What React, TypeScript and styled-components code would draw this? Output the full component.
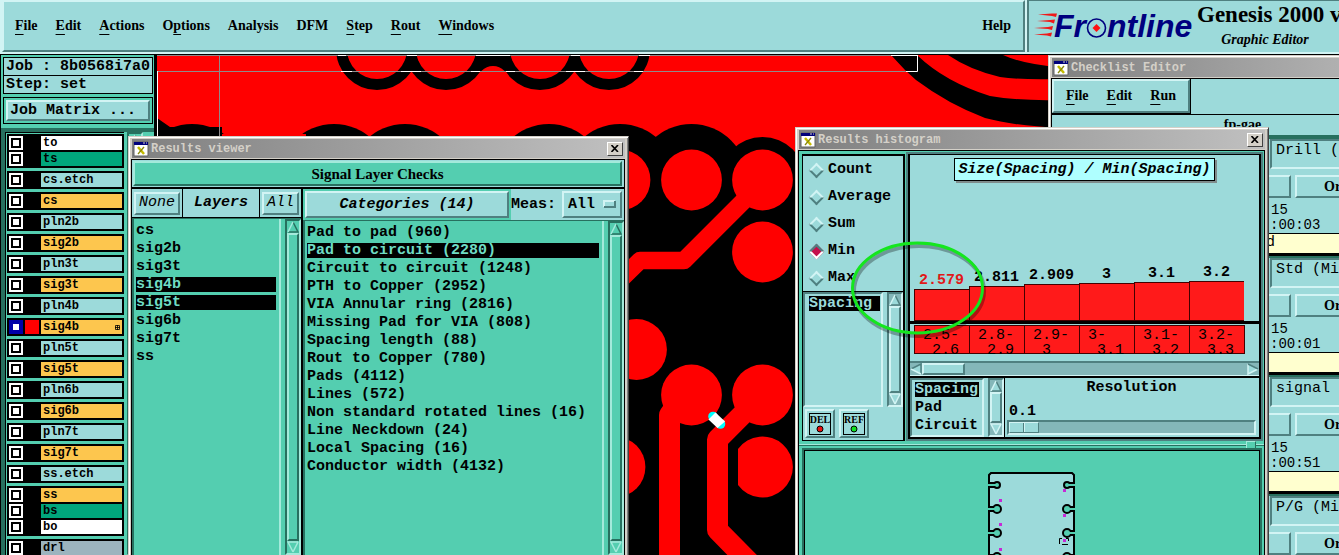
import React, { ReactNode } from 'react';
import styled, { createGlobalStyle, css } from 'styled-components';

const serif = '"Liberation Serif", serif';
const mono = '"Liberation Mono", monospace';
const aqua = '#9cdada';
const aquaLight = '#d2f4f4';
const aquaDark = '#4f8080';
const mint = '#54ceb0';
const mintLight = '#a4eadb';
const mintDark = '#27705f';
const trough = '#84b7b9';

const GlobalStyle = createGlobalStyle`
  * { box-sizing: border-box; }
  body { margin: 0; background: #000; color: #000; }
  button, select, input { font: inherit; color: inherit; margin: 0; padding: 0; }
  ul { list-style: none; margin: 0; padding: 0; }
  p, h1, h2 { margin: 0; }
`;

const raised = css`
  border: 2px solid;
  border-color: ${aquaLight} ${aquaDark} ${aquaDark} ${aquaLight};
`;
const sunken = css`
  border: 2px solid;
  border-color: ${aquaDark} ${aquaLight} ${aquaLight} ${aquaDark};
`;

const Root = styled.div`
  position: relative;
  display: flex;
  flex-direction: column;
  height: 100vh;
  overflow: hidden;
  font: bold 15px/18px ${mono};
`;

/* ---------- top bar ---------- */
const TopBar = styled.header`
  display: flex;
  flex: 0 0 55px;
  background: ${aquaLight};
  border-bottom: 1px solid #000;
`;
const MenuBar = styled.nav`
  ${raised}
  flex: 1;
  display: flex;
  align-items: center;
  gap: 18px;
  margin: 0 2px 2px 2px;
  padding: 0 12px 0 11px;
  background: ${aqua};
`;
const MenuButton = styled.button<{ $push?: boolean }>`
  border: 0;
  background: none;
  font: bold 14px/20px ${serif};
  margin-left: ${(p) => (p.$push ? 'auto' : '0')};
  u { text-underline-offset: 4px; text-decoration-thickness: 1px; }
`;
const Brand = styled.div`
  display: flex;
  flex: 0 0 312px;
  overflow: hidden;
  border-left: 2px solid ${aquaDark};
  border-top: 1px solid ${aquaDark};
  background: ${aqua};
  margin-bottom: 2px;
  > svg { flex: none; }
`;
const BrandText = styled.div`
  display: flex;
  flex-direction: column;
  align-items: center;
  flex: none;
  width: 150px;
  white-space: nowrap;
`;
const Product = styled.h1`
  align-self: flex-start;
  font: bold 23px/28px ${serif};
`;
const ProductPart = styled.p`
  font: italic bold 14px/22px ${serif};
  padding-right: 14px;
`;

/* ---------- work area ---------- */
const WorkArea = styled.main`
  display: flex;
  flex: 1;
  min-height: 0;
`;
const SidePanel = styled.aside`
  display: flex;
  flex-direction: column;
  flex: 0 0 157px;
  min-height: 0;
  background: ${mint};
  border-left: 1px solid #000;
  border-right: 3px solid #000;
`;
const JobInfo = styled.div`
  margin: 2px 1px 0 2px;
  border: 1px solid #000;
  background: ${aqua};
  line-height: 17px;
  p { padding-left: 2px; white-space: nowrap; }
  p + p { border-top: 1px solid #000; }
`;
const MatrixFrame = styled.div`
  margin: 3px 1px 4px 2px;
  padding: 2px;
  border: 1px solid #000;
`;
const MatrixButton = styled.button`
  ${raised}
  display: block;
  width: 100%;
  height: 21px;
  padding-left: 2px;
  line-height: 17px;
  text-align: left;
  background: ${aqua};
`;
const LayerFrame = styled.div`
  display: flex;
  flex: 1;
  gap: 3px;
  min-height: 0;
  overflow: hidden;
  border-top: 4px solid ${mintDark};
  border-left: 4px solid ${mintDark};
`;
const LayerColumn = styled.div`
  display: flex;
  flex-direction: column;
  gap: 3px;
  flex: 0 0 119px;
  padding: 1px 0 0 1px;
  border-left: 1px solid #000;
  border-top: 1px solid #000;
`;
const LayerGroup = styled.div`
  display: flex;
  flex: none;
  flex-direction: column;
  gap: 2px;
  padding: 2px;
  background: #000;
`;
const LayerRow = styled.label<{ $bg: string; $fg?: string }>`
  display: grid;
  grid-template-columns: 14px 14px 1fr;
  column-gap: 2px;
  height: 14px;
  font-size: 12px;
  line-height: 14px;
  > i { background: ${(p) => (p.$fg ? p.$fg : '#000')}; }
  > span {
    display: flex;
    justify-content: space-between;
    align-items: center;
    background: ${(p) => p.$bg};
    padding: 0 2px;
  }
`;
const LayerBox = styled.input<{ $on?: boolean }>`
  appearance: none;
  width: 14px;
  height: 14px;
  background: #fff;
  border: 2px solid ${(p) => (p.$on ? '#0000a8' : '#fff')};
  box-shadow: inset 0 0 0 2px ${(p) => (p.$on ? '#0000a8' : '#000')};
`;
const Canvas = styled.section`
  flex: 1;
  min-width: 0;
  background: #000;
  svg { display: block; width: 100%; height: 100%; }
`;

/* ---------- windows ---------- */
const Win = styled.section<{ $x: number; $y: number; $w: number }>`
  position: absolute;
  left: ${(p) => p.$x}px;
  top: ${(p) => p.$y}px;
  width: ${(p) => p.$w}px;
  bottom: 0;
  display: flex;
  flex-direction: column;
  padding: 1px 1px 0 1px;
  border: 1px solid #d4d0c8;
  border-right: 1px solid #404040;
  border-bottom: 0;
  background: #d4d0c8;
  box-shadow: inset 1px 1px 0 #fff, inset -1px 0 0 #808080;
  overflow: hidden;
`;
const TitleBar = styled.header`
  display: flex;
  flex: 0 0 19px;
  align-items: center;
  gap: 2px;
  margin: 1px 2px 0 2px;
  padding: 0 2px 0 1px;
  background: linear-gradient(90deg, #808080, #c0c0c0);
  h2 { flex: 1; font: bold 12px/18px ${mono}; color: #d4d0c8; }
`;
const CloseButton = styled.button`
  display: grid;
  place-items: center;
  width: 16px;
  height: 14px;
  background: #d4d0c8;
  border: 1px solid;
  border-color: #fff #404040 #404040 #fff;
`;
const WinBody = styled.div<{ $bg: string }>`
  display: flex;
  flex: 1;
  flex-direction: column;
  min-height: 0;
  margin: 1px 2px 0 1px;
  border: 1px solid #000;
  border-bottom: 0;
  background: ${(p) => p.$bg};
`;

/* ---------- scroll bars ---------- */
const ScrollV = styled.div<{ $mint?: boolean }>`
  display: flex;
  flex-direction: column;
  flex: 0 0 16px;
  min-height: 0;
  background: ${(p) => (p.$mint ? mint : trough)};
  border: 2px solid;
  border-color: ${(p) => (p.$mint
    ? `${mintDark} ${mintLight} ${mintLight} ${mintDark}`
    : `${aquaDark} ${aquaLight} ${aquaLight} ${aquaDark}`)};
  svg { flex: none; display: block; }
  > i {
    flex: 1;
    background: ${(p) => (p.$mint ? mint : aqua)};
    border: 2px solid;
    border-color: ${(p) => (p.$mint
      ? `${mintLight} ${mintDark} ${mintDark} ${mintLight}`
      : `${aquaLight} ${aquaDark} ${aquaDark} ${aquaLight}`)};
  }
`;
const ScrollH = styled.div`
  display: flex;
  flex: 0 0 15px;
  background: ${trough};
  border-top: 2px solid ${aquaDark};
  border-bottom: 1px solid ${aquaLight};
  svg { flex: none; display: block; }
  > i { ${raised} width: 43px; background: ${aqua}; }
  > b { flex: 1; }
`;

type Dir = 'up' | 'down' | 'left' | 'right';
const Arrow = ({ dir, green }: { dir: Dir; green?: boolean }) => {
  const angle = { up: 0, right: 90, down: 180, left: 270 }[dir];
  const light = green ? mintLight : aquaLight;
  const dark = green ? mintDark : aquaDark;
  const lit = dir === 'up' || dir === 'left';
  return (
    <svg width="12" height="12" viewBox="0 0 12 12" aria-hidden="true">
      <g transform={`rotate(${angle} 6 6)`}>
        <path d="M6 1 11 11H1Z" fill={green ? mint : aqua} />
        <path d="M6 1 11 11H1" stroke={lit ? dark : light} strokeWidth="1.5" fill="none" />
        <path d="M1 11 6 1" stroke={dir === 'right' ? dark : light} strokeWidth="1.5" />
      </g>
    </svg>
  );
};
const VBar = ({ green }: { green?: boolean }) => (
  <ScrollV $mint={green}>
    <Arrow dir="up" green={green} />
    <i />
    <Arrow dir="down" green={green} />
  </ScrollV>
);

const XIcon = () => (
  <svg width="16" height="16" viewBox="0 0 16 16" aria-hidden="true">
    <path d="M1 1H15V15H1Z" fill="#fff" stroke="#606060" />
    <path d="M1 1H15V4H1Z" fill="#00007b" />
    <path d="M10 2H12M13 2H14" stroke="#d4d0c8" />
    <path d="M5 6 11 13" stroke="#c4bc00" strokeWidth="2.5" />
    <path d="M11 6 5 13" stroke="#8a880a" strokeWidth="1.3" />
  </svg>
);
const Window = ({ title, x, y, w, bg, children }: {
  title: string; x: number; y: number; w: number; bg: string; children: ReactNode;
}) => (
  <Win $x={x} $y={y} $w={w} aria-label={title}>
    <TitleBar>
      <XIcon />
      <h2>{title}</h2>
      <CloseButton aria-label="Close">
        <svg width="8" height="7" viewBox="0 0 8 7"><path d="M0.5 0 7 7M7 0 0.5 7" stroke="#000" strokeWidth="1.6" /></svg>
      </CloseButton>
    </TitleBar>
    <WinBody $bg={bg}>{children}</WinBody>
  </Win>
);

/* ---------- results viewer ---------- */
const CheckHeader = styled.div`
  border-bottom: 2px solid #000;
  background: ${aqua};
  padding: 1px 2px 1px 1px;
  button {
    display: block;
    width: 100%;
    height: 25px;
    background: ${mint};
    border: 2px solid;
    border-color: ${mintLight} ${mintDark} ${mintDark} ${mintLight};
    font: bold 15px/20px ${serif};
  }
`;
const Split = styled.div`
  display: grid;
  grid-template-columns: 169px 1fr;
  flex: 1;
  min-height: 0;
`;
const Pane = styled.div`
  display: flex;
  flex-direction: column;
  min-width: 0;
  min-height: 0;
  & + & { border-left: 2px solid #000; }
`;
const PaneHead = styled.div`
  display: flex;
  flex: 0 0 29px;
  background: ${aqua};
`;
const HeadCell = styled.div<{ $grow?: boolean; $bg?: string }>`
  display: flex;
  align-items: center;
  justify-content: center;
  flex: ${(p) => (p.$grow ? '1' : 'none')};
  padding: 2px;
  font-style: italic;
  background: ${(p) => p.$bg || aqua};
`;
const LayerHead = styled(PaneHead)`
  border-bottom: 1px solid #000;
  ${HeadCell} + ${HeadCell} { border-left: 1px solid #000; }
`;
const PlainButton = styled.button<{ $light?: boolean; $wide?: boolean }>`
  ${raised}
  height: ${(p) => (p.$wide ? '27px' : '23px')};
  width: ${(p) => (p.$wide ? '100%' : 'auto')};
  padding: 0 3px;
  background: ${aqua};
  font-style: italic;
  font-weight: ${(p) => (p.$light ? 'normal' : 'bold')};
`;
const MeasLabel = styled.label`
  display: flex;
  align-items: center;
  justify-content: space-between;
  flex: 0 0 113px;
  padding-right: 2px;
`;
const SelectBox = styled.span`
  position: relative;
  display: flex;
  svg { position: absolute; right: 6px; top: 9px; pointer-events: none; }
`;
const Select = styled.select`
  ${raised}
  appearance: none;
  width: 60px;
  height: 27px;
  padding-left: 4px;
  background: ${aqua};
  border-radius: 0;
`;
const ListRow = styled.div`
  display: flex;
  flex: 1;
  min-height: 0;
  border-left: 2px solid ${mintDark};
  border-top: 1px solid ${mintDark};
`;
const List = styled.ul`
  flex: 1;
  display: flex;
  flex-direction: column;
  gap: 3px;
  padding: 4px 3px 0 2px;
  margin-right: 4px;
  border-right: 2px solid ${mintLight};
  overflow: hidden;
`;
const ListItem = styled.li<{ $on?: boolean; $ink?: string }>`
  flex: none;
  line-height: 15px;
  white-space: nowrap;
  ${(p) => p.$on && css`background: #000; color: ${p.$ink || '#6fdcc4'};`}
`;

/* ---------- histogram ---------- */
const HistTop = styled.div`
  display: flex;
  flex: 0 0 290px;
  padding: 3px 3px 0 3px;
  gap: 3px;
`;
const Modes = styled.div`
  display: flex;
  flex-direction: column;
  flex: 0 0 103px;
  border: 1px solid #000;
  border-right-width: 2px;
  background: ${aqua};
`;
const ModeList = styled.fieldset`
  display: flex;
  flex-direction: column;
  gap: 9px;
  margin: 0;
  padding: 5px 0 4px 6px;
  border: 0;
  border-top: 1px solid #000;
  border-bottom: 1px solid #000;
  label { display: flex; align-items: center; gap: 6px; padding-left: 2px; }
`;
const Diamond = styled.input`
  appearance: none;
  width: 11px;
  height: 11px;
  transform: rotate(45deg);
  background: ${aqua};
  ${raised}
  &:checked {
    background: #c4104c;
    border-color: ${aquaDark} #fff #fff ${aquaDark};
  }
`;
const FieldArea = styled.div`
  display: flex;
  flex: 1;
  min-height: 0;
  gap: 4px;
`;
const FieldList = styled.ul`
  ${sunken}
  flex: 1;
  padding: 2px 1px 2px 4px;
  ${ListItem} { color: ${aqua}; }
`;
const ToolRow = styled.div`
  display: flex;
  gap: 4px;
  padding: 2px;
`;
const ToolButton = styled.button`
  ${raised}
  display: grid;
  place-items: center;
  width: 30px;
  height: 29px;
  background: ${aqua};
  > span {
    display: flex;
    flex-direction: column;
    align-items: center;
    width: 22px;
    height: 22px;
    border: 1px solid #000;
    font: bold 10px/11px ${serif};
  }
`;
const Plot = styled.div`
  display: flex;
  flex-direction: column;
  flex: 1;
  min-width: 0;
  margin-bottom: 2px;
  border: 2px solid #000;
  border-top-width: 1px;
  background: ${aqua};
  outline: 2px solid ${aquaDark};
  outline-offset: 0;
`;
const PlotTitle = styled.h2`
  align-self: center;
  margin: 3px 0 0 0;
  padding: 1px 3px 0 3px;
  border: 1px solid #000;
  background: #afffff;
  box-shadow: 2px 2px 0 #7f8c8c;
  font: italic bold 15px/20px ${mono};
  white-space: nowrap;
`;
const Bars = styled.div`
  display: flex;
  align-items: flex-end;
  flex: 1;
  padding-left: 4px;
  border-bottom: 3px solid #000;
`;
const BarColumn = styled.div<{ $hot?: boolean }>`
  display: flex;
  flex-direction: column;
  align-items: center;
  width: 55px;
  line-height: 17px;
  color: ${(p) => (p.$hot ? '#e01818' : '#000')};
`;
const BarFill = styled.i`
  align-self: stretch;
  background: #ff1a1a;
  border: 1px solid #400;
  border-right: 0;
`;
const AxisRow = styled.div`
  display: flex;
  align-self: flex-start;
  margin: 1px 0 7px 4px;
  border-right: 1px solid #400;
`;
const AxisCell = styled.div`
  display: flex;
  flex-direction: column;
  width: 55px;
  height: 29px;
  padding: 2px 8px 0 8px;
  line-height: 15px;
  font-weight: normal;
  border: 1px solid #400;
  border-right: 0;
  background: #ff1a1a;
  span + span { padding-left: 9px; }
`;
const PlotFoot = styled.div`
  display: flex;
  flex: 0 0 60px;
  border-top: 2px solid #000;
`;
const FootList = styled.ul`
  ${sunken}
  flex: 0 0 74px;
  padding: 2px 3px;
  margin-right: 4px;
  overflow: hidden;
  li + li { margin-top: 3px; }
`;
const Resolution = styled.label`
  display: flex;
  flex: 1;
  flex-direction: column;
  justify-content: space-between;
  border-left: 1px solid #000;
  padding: 1px 3px 2px 2px;
  > b { text-align: center; }
  > span { padding-left: 2px; line-height: 14px; margin-top: 6px; }
`;
const Slider = styled.input`
  ${sunken}
  appearance: none;
  width: 100%;
  height: 15px;
  background: ${trough};
  &::-webkit-slider-thumb {
    appearance: none;
    width: 30px;
    height: 11px;
    border: 1px solid;
    border-color: ${aquaLight} ${aquaDark} ${aquaDark} ${aquaLight};
    background: linear-gradient(90deg, ${aqua} 13px, ${aquaDark} 13px 14px, ${aquaLight} 14px 15px, ${aqua} 15px);
  }
`;
const Sash = styled.div`
  display: flex;
  justify-content: flex-end;
  align-items: center;
  flex: 0 0 9px;
  padding-right: 8px;
  background: linear-gradient(${mint} 3px, ${mintLight} 3px 4px, ${mintDark} 4px 5px, ${mint} 5px);
  i {
    width: 10px;
    height: 9px;
    background: ${mint};
    border: 1px solid;
    border-color: ${mintLight} ${mintDark} ${mintDark} ${mintLight};
  }
`;
const BoardPane = styled.div`
  flex: 1;
  display: flex;
  justify-content: center;
  min-height: 0;
  margin: 0 4px 0 5px;
  padding-top: 20px;
  overflow: hidden;
  border: 1px solid #000;
  border-bottom: 0;
  outline: 2px solid ${mintDark};
  svg { flex: none; }
`;

/* ---------- checklist editor ---------- */
const MenuStrip = styled.div`
  align-self: flex-start;
  flex: none;
  display: flex;
  align-items: center;
  gap: 18px;
  width: 138px;
  height: 34px;
  padding-left: 12px;
  border: 2px solid;
  border-color: ${aquaLight} ${aquaDark} ${aquaDark} ${aquaLight};
  outline: 1px solid #000;
`;
const ListName = styled.p`
  border-top: 1px solid #000;
  border-bottom: 2px solid ${mintDark};
  text-align: center;
  margin-top: 1px;
  font: bold 14px/20px ${serif};
`;
const CheckCard = styled.article`
  flex: none;
  border-top: 2px solid ${mintDark};
  border-bottom: 3px solid #000;
  font-weight: normal;
  height: 119px;
`;
const CardTitle = styled.input`
  ${sunken}
  display: block;
  height: 30px;
  width: 160px;
  margin-left: 218px;
  padding: 0 0 8px 4px;
  background: none;
  border-radius: 0;
`;
const CardActions = styled.div`
  display: flex;
  gap: 4px;
  height: 34px;
  padding: 6px 0 5px 141px;
`;
const CardButton = styled.button`
  ${raised}
  width: ${(p) => (p.children ? '130px' : '98px')};
  padding-left: 27px;
  text-align: left;
  background: ${aqua};
  font: bold 14px/18px ${serif};
`;
const CardStatus = styled.div`
  padding-left: 218px;
  font-size: 14px;
  line-height: 15px;
  height: 30px;
  p:first-child { padding-left: 1px; }
`;
const CardNote = styled.div`
  height: 20px;
  padding-left: 214px;
  border-top: 1px solid #000;
  background: #ffffcf;
`;
const Marking = styled.svg`
  position: absolute;
  left: 844px;
  top: 234px;
  pointer-events: none;
`;

const menus: [string, string, string][] = [
  ['', 'F', 'ile'], ['', 'E', 'dit'], ['', 'A', 'ctions'], ['O', 'p', 'tions'],
  ['Analysis', '', ''], ['DFM', '', ''], ['', 'S', 'tep'], ['', 'R', 'out'], ['', 'W', 'indows'],
];

type Layer = { name: string; bg: string; on?: boolean };
const amber = '#fdc64e';
const single = (name: string, bg: string, on?: boolean): Layer[] => [{ name, bg, on }];
const layerGroups: Layer[][] = [
  [{ name: 'to', bg: '#fff' }, { name: 'ts', bg: '#00a67c' }],
  single('cs.etch', aqua), single('cs', amber), single('pln2b', aqua), single('sig2b', amber),
  single('pln3t', aqua), single('sig3t', amber), single('pln4b', aqua), single('sig4b', amber, true),
  single('pln5t', aqua), single('sig5t', amber), single('pln6b', aqua), single('sig6b', amber),
  single('pln7t', aqua), single('sig7t', amber), single('ss.etch', aqua),
  [{ name: 'ss', bg: amber }, { name: 'bs', bg: '#00a67c' }, { name: 'bo', bg: '#fff' }],
  single('drl', '#9cb4be'),
];

const viewerLayers = ['cs', 'sig2b', 'sig3t', 'sig4b', 'sig5t', 'sig6b', 'sig7t', 'ss'];
const categories = [
  'Pad to pad (960)', 'Pad to circuit (2280)', 'Circuit to circuit (1248)', 'PTH to Copper (2952)',
  'VIA Annular ring (2816)', 'Missing Pad for VIA (808)', 'Spacing length (88)', 'Rout to Copper (780)',
  'Pads (4112)', 'Lines (572)', 'Non standard rotated lines (16)', 'Line Neckdown (24)',
  'Local Spacing (16)', 'Conductor width (4132)',
];
const bars = [
  { value: '2.579', from: '2.5-', to: '2.6', height: 32 },
  { value: '2.811', from: '2.8-', to: '2.9', height: 35 },
  { value: '2.909', from: '2.9-', to: '3', height: 37 },
  { value: '3', from: '3-', to: '3.1', height: 38 },
  { value: '3.1', from: '3.1-', to: '3.2', height: 39 },
  { value: '3.2', from: '3.2-', to: '3.3', height: 40 },
];
const checks = [
  { name: 'Drill (', time: ':00:03', note: 'd' },
  { name: 'Std (Mi', time: ':00:01', note: '' },
  { name: 'signal', time: ':00:51', note: '' },
  { name: 'P/G (Mi', time: '', note: '' },
];

const Logo = () => (
  <svg width="168" height="51" viewBox="1028 1 168 51" aria-label="Frontline">
    <g fill="#f01818">
      <path d="M1037 14.5 1051 13.5 1056 13.5 1055 17 1051 16Z" />
      <path d="M1036 21 1049 20 1054 19.5 1053 23.5 1049 22Z" />
      <path d="M1033 28 1047 27 1052 26 1051 30 1047 29Z" />
      <path d="M1033 34.5 1046 33.5 1051 32.5 1050 36.5 1046 35.5Z" />
    </g>
    <g fill="#00007f" fontFamily='"Liberation Sans", sans-serif' fontWeight="bold" fontStyle="italic" fontSize="32">
      <text x="1053" y="37">Fr</text>
      <text x="1106" y="37">ntline</text>
    </g>
    <circle cx="1095.500" cy="28" r="9" fill="none" stroke="#00007f" strokeWidth="1.6" />
    <path d="M1095.500 24 1099.500 28 1095.500 32 1091.500 28Z" fill="#ff1010" />
  </svg>
);

const haloX = [192, 334, 405, 549, 620, 691.5];
const pads: [number, number][] = [
  [620, 180], [691.5, 180], [762.5, 180], [762.5, 252], [636.5, 349.5], [691.5, 395], [762.5, 395], [615, 467],
];
const Artwork = () => (
  <svg viewBox="157 55 1182 500" preserveAspectRatio="xMinYMin slice" aria-label="Board artwork">
    <rect x="157" y="55" width="1182" height="500" fill="#000" />
    <path d="M157 55H1060V150H795V160H737V148H430V140H380V148H222V127H170L157 118Z" fill="#f00" />
    <path d="M157 118 167 127 180 127V140H157Z" fill="#000" />
    {haloX.map((x) => <circle key={x} cx={x} cy="180" r="56" />)}
    <path d="M222 134H306V150H222Z" fill="#f00" />
    <circle cx="762.500" cy="180" r="43" />
    {[377, 446, 540, 609].map((x) => <circle key={x} cx={x} cy="49" r="41" />)}
    <rect x="475" y="55" width="36" height="17" />
    <circle cx="493" cy="82" r="16" fill="#f00" />
    {[377, 446, 540, 609].map((x) => <circle key={x} cx={x} cy="49" r="30" fill="#f00" />)}
    <path d="M891 55 905 70 916 80 Q948 104 985 118 Q1015 126 1060 128V100 Q1020 101 990 96 Q945 82 917 55Z" />
    <path d="M948 55 Q970 70 1000 77 Q1020 80 1060 79V67 Q1025 65 1003 55Z" />
    {pads.map(([x, y]) => <circle key={`${x}-${y}`} cx={x} cy={y} r="30.400" fill="#f00" />)}
    <path d="M730 440H738V494H730Z" fill="#000" />
    <path d="M738 449 A30.400 30.400 0 1 1 738 485Z" fill="#f00" />
    <g fill="none" stroke="#f00" strokeLinejoin="round">
      <path d="M618 282 640 260.500H684L755 189.500" strokeWidth="17.500" />
      <path d="M669.500 560V415L680 400" strokeWidth="21" />
      <path d="M760 397 717.500 439.500V530L750 563" strokeWidth="21" />
    </g>
    <circle cx="713" cy="416.500" r="4.800" fill="#0ff" />
    <circle cx="720.500" cy="424" r="4.800" fill="#0ff" />
    <path d="M708.500 419.500 715.500 412.500 725 421.500 717.500 428Z" fill="#fff" />
    <g fill="none" stroke="#8f8a8a">
      <path d="M157 55.500H917M157 71.500H917M219.500 55V137" />
      <path d="M157.500 71V137M917.500 55V71.500H906M891 55.500H917M341 71.500H352M401 71.500H421M471 71.500H480M506 71.500H515M566 71.500H585M634 71.500H643" stroke="#fff" />
      <path d="M338 55.500H346M407 55.500H417M476 55.500H510M571 55.500H580M639 55.500H650" stroke="#fff" />
    </g>
  </svg>
);

const notches = [485, 509, 533, 557];
const BoardOutline = () => (
  <svg width="90" height="90" viewBox="987 471 90 90" aria-label="Board outline">
    <path d="M989 570V475L991 473H1072L1074 475V570Z" fill={aqua} stroke="#000" strokeWidth="2" />
    {notches.map((y, i) => (
      <g key={y} fill={mint} stroke="#000" strokeWidth="2">
        <circle cx="997" cy={y} r={i ? 4 : 3} />
        <circle cx="1067" cy={y} r={i ? 4 : 3} />
        <path d={`M988 ${y - 2}H994M988 ${y + 2}H994M1075 ${y - 2}H1070M1075 ${y + 2}H1070`} />
        <path d={`M987 ${y}H997M1077 ${y}H1067`} stroke={mint} />
      </g>
    ))}
    <g fill="#c728d6">
      {[499, 523, 548].map((y) => <rect key={y} x="999" y={y} width="3" height="3" />)}
      {[489, 514, 539].map((y) => <rect key={y} x="1063" y={y} width="3" height="3" />)}
    </g>
    <path d="M1059.500 544V538.500H1062M1066 538.500H1068.500V541M1062 544.500H1068" fill="none" stroke="#000" />
  </svg>
);

export default function App() {
  return (
    <Root>
      <GlobalStyle />
      <TopBar>
        <MenuBar>
          {menus.map(([a, b, c]) => <MenuButton key={a + b + c}>{a}<u>{b}</u>{c}</MenuButton>)}
          <MenuButton $push>Help</MenuButton>
        </MenuBar>
        <Brand>
          <Logo />
          <BrandText>
            <Product>Genesis 2000 v</Product>
            <ProductPart>Graphic Editor</ProductPart>
          </BrandText>
        </Brand>
      </TopBar>

      <WorkArea>
        <SidePanel>
          <JobInfo>
            <p>Job : 8b0568i7a0</p>
            <p>Step: set</p>
          </JobInfo>
          <MatrixFrame><MatrixButton>Job Matrix ...</MatrixButton></MatrixFrame>
          <LayerFrame>
            <LayerColumn>
              {layerGroups.map((group) => (
                <LayerGroup key={group[0].name}>
                  {group.map((l) => (
                    <LayerRow key={l.name} $bg={l.bg} $fg={l.on ? '#f00' : undefined}>
                      <LayerBox type="checkbox" $on={l.on} defaultChecked={l.on} />
                      <i />
                      <span>
                        {l.name}
                        {l.on && (
                          <svg width="5" height="5" viewBox="0 0 5 5"><path d="M.5.5H4.500V4.500H.5ZM2.500 0V5M0 2.500H5" fill="none" stroke="#000" strokeWidth=".8" /></svg>
                        )}
                      </span>
                    </LayerRow>
                  ))}
                </LayerGroup>
              ))}
            </LayerColumn>
            <VBar green />
          </LayerFrame>
        </SidePanel>
        <Canvas><Artwork /></Canvas>
      </WorkArea>

      <Window title="Checklist Editor" x={1048} y={55} w={390} bg={aqua}>
        <MenuStrip>
          <MenuButton><u>F</u>ile</MenuButton>
          <MenuButton><u>E</u>dit</MenuButton>
          <MenuButton><u>R</u>un</MenuButton>
        </MenuStrip>
        <ListName>fp-gae</ListName>
        {checks.map((c) => (
          <CheckCard key={c.name}>
            <CardTitle defaultValue={c.name} aria-label="Check name" />
            <CardActions>
              <CardButton aria-label="Action" />
              <CardButton>Or</CardButton>
            </CardActions>
            <CardStatus>
              {c.time && <p>15</p>}
              <p>{c.time}</p>
            </CardStatus>
            <CardNote>{c.note}</CardNote>
          </CheckCard>
        ))}
      </Window>

      <Window title="Results viewer" x={128} y={136} w={501} bg={mint}>
        <CheckHeader><button>Signal Layer Checks</button></CheckHeader>
        <Split>
          <Pane>
            <LayerHead>
              <HeadCell><PlainButton $light>None</PlainButton></HeadCell>
              <HeadCell $grow>Layers</HeadCell>
              <HeadCell><PlainButton $light>All</PlainButton></HeadCell>
            </LayerHead>
            <ListRow>
              <List>
                {viewerLayers.map((l) => <ListItem key={l} $on={l === 'sig4b' || l === 'sig5t'}>{l}</ListItem>)}
              </List>
              <VBar green />
            </ListRow>
          </Pane>
          <Pane>
            <PaneHead>
              <HeadCell $grow $bg={mint}><PlainButton $wide>Categories (14)</PlainButton></HeadCell>
              <MeasLabel>
                Meas:
                <SelectBox>
                  <Select defaultValue="All"><option>All</option></Select>
                  <svg width="13" height="8" viewBox="0 0 13 8">
                    <path d="M1 7V1H12" fill="none" stroke={aquaLight} strokeWidth="2" />
                    <path d="M1 7H12V1" fill="none" stroke={aquaDark} strokeWidth="2" />
                  </svg>
                </SelectBox>
              </MeasLabel>
            </PaneHead>
            <ListRow>
              <List>
                {categories.map((c, i) => <ListItem key={c} $on={i === 1}>{c}</ListItem>)}
              </List>
              <VBar green />
            </ListRow>
          </Pane>
        </Split>
      </Window>

      <Window title="Results histogram" x={795} y={127} w={474} bg={mint}>
        <HistTop>
          <Modes>
            <ModeList>
              {['Count', 'Average', 'Sum', 'Min', 'Max'].map((m) => (
                <label key={m}>
                  <Diamond type="radio" name="mode" defaultChecked={m === 'Min'} />
                  {m}
                </label>
              ))}
            </ModeList>
            <FieldArea>
              <FieldList><ListItem $on $ink={aqua}>Spacing</ListItem></FieldList>
              <VBar />
            </FieldArea>
            <ToolRow>
              {[['DEL', '#e81010'], ['REF', '#10e020']].map(([t, c]) => (
                <ToolButton key={t}>
                  <span>
                    {t}
                    <svg width="8" height="8" viewBox="0 0 8 8"><circle cx="4" cy="4" r="3" fill={c} stroke="#000" /></svg>
                  </span>
                </ToolButton>
              ))}
            </ToolRow>
          </Modes>
          <Plot>
            <PlotTitle>Size(Spacing) / Min(Spacing)</PlotTitle>
            <Bars>
              {bars.map((b, i) => (
                <BarColumn key={b.value} $hot={i === 0}>
                  {b.value}
                  <BarFill style={{ height: b.height }} />
                </BarColumn>
              ))}
            </Bars>
            <AxisRow>
              {bars.map((b) => <AxisCell key={b.from}><span>{b.from}</span><span>{b.to}</span></AxisCell>)}
            </AxisRow>
            <ScrollH><Arrow dir="left" /><i /><b /><Arrow dir="right" /></ScrollH>
            <PlotFoot>
              <FootList>
                <ListItem $on $ink={aqua}>Spacing</ListItem>
                <ListItem>Pad</ListItem>
                <ListItem>Circuit</ListItem>
              </FootList>
              <VBar />
              <Resolution>
                <b>Resolution</b>
                <span>0.1</span>
                <Slider type="range" min="0" max="10" defaultValue="0" />
              </Resolution>
            </PlotFoot>
          </Plot>
        </HistTop>
        <Sash><i /></Sash>
        <BoardPane><BoardOutline /></BoardPane>
      </Window>

      <Marking width="150" height="110" viewBox="0 0 150 110" aria-hidden="true">
        <ellipse cx="75" cy="57" rx="65" ry="45" fill="none" stroke="#000" strokeOpacity=".3" strokeWidth="4" />
        <ellipse cx="73.500" cy="54" rx="65" ry="45" fill="none" stroke="#14e61e" strokeWidth="3" />
      </Marking>
    </Root>
  );
}
